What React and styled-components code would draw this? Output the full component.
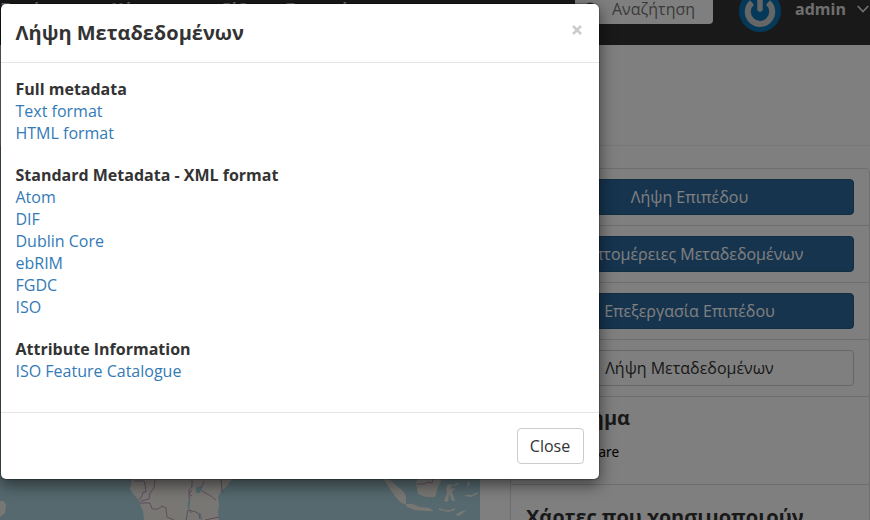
import React from 'react';
import styled, { createGlobalStyle } from 'styled-components';

const Global = createGlobalStyle`
  * { box-sizing: border-box; }
  html, body { margin: 0; height: 520px; overflow: hidden; }
  body { font: 16px/22px "Open Sans", "Noto Sans", sans-serif; color: #333; background: #fff; }
`;
const Page = styled.div`position: relative; width: 870px; height: 520px; overflow: hidden;`;
const Header = styled.header`
  height: 45px; background: #333; display: flex; align-items: flex-start; color: #ddd; font-weight: 600;
`;
const Nav = styled.nav`
  display: flex; width: 575px; margin-top: -2px; height: 22px; padding-left: 1px; font-weight: 700; white-space: nowrap;
`;
const NavItem = styled.span`width: ${p => p.$w}px;`;
const Search = styled.div`
  width: 138px; height: 36px; margin-top: -12px; background: #fff; border-radius: 4px;
  display: flex; align-items: center; gap: 14px; padding: 6px 12px 0 9px; font-weight: 400; color: #777;
`;
const Avatar = styled.svg`width: 42px; height: 42px; margin: -10px 0 0 26px;`;
const User = styled.div`
  display: flex; align-items: center; gap: 11px; margin: -2px 0 0 14px; font-weight: 700; color: #ddd;
`;
const Hero = styled.section`height: 101px; border-bottom: 1px solid #eee;`;
const Columns = styled.main`display: flex; align-items: flex-start;`;
const MapPane = styled.svg`width: 480px; height: 374px; margin-right: 30px; display: block;`;
const Side = styled.aside`
  width: 360px; height: 400px; margin-top: 22px; border: 1px solid #ddd; border-radius: 4px;
`;
const Entry = styled.div`
  height: ${p => p.$h || 57}px; padding: ${p => p.$top || 10}px 15px 10px; border-bottom: 1px solid #ddd;
`;
const Button = styled.button`
  width: ${p => (p.$compact ? '67px' : '100%')}; height: 36px; padding: 0 1px 0 0; border-radius: 4px;
  border: 1px solid ${p => (p.$primary ? '#265a87' : '#ccc')};
  background: ${p => (p.$primary ? '#2c689c' : '#fff')}; color: ${p => (p.$primary ? '#fff' : '#333')};
  font: 16px/22px "Open Sans", "Noto Sans", sans-serif; white-space: nowrap;
`;
const Heading = styled.h4`margin: 0; font-size: 20px; line-height: 24px; font-weight: 700; white-space: nowrap;`;
const Legend = styled.div`
  width: 93px; margin-top: 12px; text-align: right; font: 13.5px/20px "Noto Sans", sans-serif; color: #000;
`;
const Backdrop = styled.div`position: absolute; inset: 0; background: rgba(0, 0, 0, .5);`;
const Dialog = styled.section`
  position: absolute; left: 0; top: 3px; width: 600px; height: 477px; background: #fff; background-clip: padding-box;
  border: 1px solid rgba(0, 0, 0, .2); border-radius: 6px; box-shadow: 0 5px 15px rgba(0, 0, 0, .5);
  display: flex; flex-direction: column;
`;
const DialogHeader = styled.header`
  height: 59px; padding: 15px 15px 15px 14.5px; display: flex; justify-content: space-between; border-bottom: 1px solid #e5e5e5;
`;
const Title = styled.h4`margin: 0; font-size: 20px; line-height: 28px; font-weight: 700;`;
const CloseIcon = styled.svg`width: 12px; height: 12px; margin: 5px 1px 0 0;`;
const Body = styled.div`flex: 1; padding: 15px 15px 0 14.5px;`;
const Group = styled.div`display: flex; flex-direction: column; align-items: flex-start; margin-bottom: 20px;`;
const Link = styled.a`color: #337ab7;`;
const Label = styled.strong`font-weight: 700;`;
const Footer = styled.footer`
  height: 67px; flex: 0 0 67px; padding: 15px; border-top: 1px solid #e5e5e5; display: flex; justify-content: flex-end;
`;

const groups = [
  ['Full metadata', ['Text format', 'HTML format']],
  ['Standard Metadata - XML format', ['Atom', 'DIF', 'Dublin Core', 'ebRIM', 'FGDC', 'ISO']],
  ['Attribute Information', ['ISO Feature Catalogue']],
];

function WorldMap() {
  return (
    <MapPane viewBox="0 146 480 374">
      <rect y="146" width="480" height="374" fill="#aad3df" />
      <g fill="#f2efe9">
        <path d="M0 501h4l2 5-1 7-5 4z" />
        <path d="M133 475L130 489l3 5 4 4 3 4 1 5 2 4 1 9h75l-1-8 1-7-1-8 3-6 6-5 6-8 9-7 2-3z" />
        <path d="M383 478l7 2 7 6 6 5 3 5 0 9-6-3-5-6-5-7z" />
        <path d="M406 504l6 0 8 3 9 1 5 3-7 0-12-1-8-3z" />
        <path d="M416 482l3-4h21l1 3-3 6-3 10-9 0-8-3z" />
        <path d="M446 488l2-4 5 1 7-3-2 3-6 1-2 3 5-1-3 4 3 9-3 0-3-7-1 8-4-1 3-8zM465 495l7 0 6-3v2l-7 3-6-1zM439 508l6 2 5 0 5-2v2l-6 2-10-2zM455 515l7-4 5-1-8 6zM467 484l2-4 1 4-2 3z" />
      </g>
      <path fill="#aad3df" d="M196 487l5-1 1 3-2 4-4 0zM189 496l1.5 2-1 11 3 4-2 0-3-7zM199 512l2 2 1 6h-1z" />
      <g fill="none" stroke="#b98fb6" strokeWidth=".9">
        <path d="M134 481l10 0 1 3 1 8-3 0-1 4-3 4M155 479l-1 9-4 5-1 6-8 2M140 503h10l2 6 6 0 4-3 4 2 1 9 7 3M192 479l0 8-3 3 0 8M204 481l-3 7M202 491l9 5 5 4M221 479l1 12 2 2M192 490l-3 4 3 2M188 510l-2 10M188 510l8 2 3 2 1 5M205 520l14-3M417 484l8 0 2-2 5 1 1-4" />
      </g>
    </MapPane>
  );
}

export default function App() {
  return (
    <Page>
      <Global />
      <Header>
        <Nav>
          <NavItem $w={111}>Στρώματα</NavItem><NavItem $w={110}>Χάρτες</NavItem>
          <NavItem $w={64}>Είδη</NavItem><NavItem $w={120}>Σχετικά</NavItem>
        </Nav>
        <Search>
          <svg width="14" height="14" viewBox="0 0 14 14" fill="none" stroke="#555" strokeWidth="2"><circle cx="6" cy="6" r="4.5" /><path d="M9 9l4 4" /></svg>
          Αναζήτηση
        </Search>
        <Avatar viewBox="0 0 42 42">
          <circle cx="21" cy="21" r="21" fill="#0a73b5" />
          <path d="M13 12.5a12.2 12.2 0 1 0 16 0" fill="none" stroke="#ccc" strokeWidth="6" />
          <path d="M21 6v13" stroke="#ccc" strokeWidth="5.5" strokeLinecap="round" />
        </Avatar>
        <User>
          admin
          <svg width="12" height="8" viewBox="0 0 12 8" fill="none" stroke="#ddd" strokeWidth="1.8"><path d="M.7 1l5.3 5.5L11.3 1" /></svg>
        </User>
      </Header>
      <Hero />
      <Columns>
        <WorldMap />
        <Side>
          <Entry><Button $primary>Λήψη Επιπέδου</Button></Entry>
          <Entry><Button $primary>Λεπτομέρειες Μεταδεδομένων</Button></Entry>
          <Entry><Button $primary>Επεξεργασία Επιπέδου</Button></Entry>
          <Entry><Button>Λήψη Μεταδεδομένων</Button></Entry>
          <Entry $h={88} $top={9}><Heading>Υπόμνημα</Heading><Legend>healthcare</Legend></Entry>
          <Entry $h={100} $top={20}><Heading>Χάρτες που χρησιμοποιούν</Heading></Entry>
        </Side>
      </Columns>
      <Backdrop />
      <Dialog>
        <DialogHeader>
          <Title>Λήψη Μεταδεδομένων</Title>
          <CloseIcon viewBox="0 0 12 12"><path d="M2 2l8 8M10 2l-8 8" stroke="#ccc" strokeWidth="2.5" /></CloseIcon>
        </DialogHeader>
        <Body>
          {groups.map(([label, links]) => (
            <Group key={label}>
              <Label>{label}</Label>
              {links.map(l => <Link key={l}>{l}</Link>)}
            </Group>
          ))}
        </Body>
        <Footer><Button $compact>Close</Button></Footer>
      </Dialog>
    </Page>
  );
}
